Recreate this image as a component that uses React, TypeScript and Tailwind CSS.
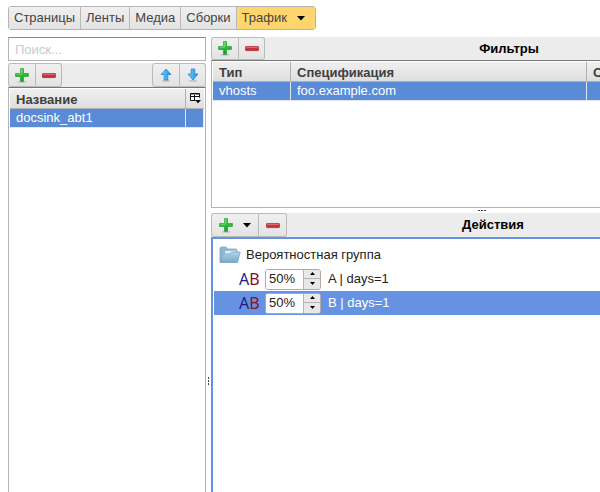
import type { ReactNode } from "react";

const BUTTON = "flex h-full items-center justify-center border-[#bababa] bg-linear-to-b from-[#f0f0f0] to-[#e3e3e3]";
const HEAD = "h-5 border-b border-[#b0b0b0] bg-linear-to-b from-[#f0f0f0] to-[#dedede] px-1.5 text-left font-bold text-[#404040]";
const CELL = "h-[19px] border-r border-b border-[#dfe7f5] bg-[#5a8bd6] px-1.5 text-white";

function PlusIcon() {
  return (
    <svg width="14" height="15" viewBox="0 0 14 15" aria-hidden="true">
      <defs>
        <linearGradient id="plus" x1="0" y1="0" x2="0" y2="1">
          <stop offset="0" stopColor="#5fdc5c" />
          <stop offset="0.5" stopColor="#2fb83a" />
          <stop offset="1" stopColor="#1c9a2b" />
        </linearGradient>
      </defs>
      <ellipse cx="7" cy="13.8" rx="4.5" ry="1" fill="#000" opacity="0.15" />
      <path d="M5.5 .6h3v4.900h4.900v3H8.500v4.900h-3V8.500H.6v-3h4.900z" fill="url(#plus)" stroke="#2da53a" strokeWidth="0.8" strokeLinejoin="round" />
      <path d="M6.300 1.500v4.800H1.500" fill="none" stroke="#9aee8e" strokeWidth="0.7" opacity="0.8" />
    </svg>
  );
}

function MinusIcon() {
  return (
    <svg width="14" height="15" viewBox="0 0 14 15" aria-hidden="true">
      <rect x="1" y="9" width="12" height="1.500" fill="#000" opacity="0.12" />
      <rect x="0.500" y="5.500" width="13" height="4" rx="0.500" fill="#c8333a" stroke="#b3343c" strokeWidth="0.800" />
      <path d="M1.200 6.400h11.600" stroke="#e88080" strokeWidth="0.800" />
    </svg>
  );
}

function ArrowIcon({ down = false }: { down?: boolean }) {
  return (
    <svg width="12" height="14" viewBox="0 0 12 14" aria-hidden="true">
      <defs>
        <linearGradient id="arrow" x1="0" y1="0" x2="1" y2="0">
          <stop offset="0" stopColor="#7fd0fb" />
          <stop offset="0.5" stopColor="#47b0f4" />
          <stop offset="1" stopColor="#1d86dc" />
        </linearGradient>
      </defs>
      <ellipse cx="6" cy="12.800" rx="4" ry="1" fill="#000" opacity="0.16" />
      <path
        d={down ? "M4.200 1h3.600v5h3.200L6 12 1 6h3.200z" : "M6 1l5 5.500H7.800V12H4.200V6.500H1z"}
        fill="url(#arrow)"
        stroke="#2a86cf"
        strokeWidth="0.800"
        strokeLinejoin="round"
      />
    </svg>
  );
}

function Caret() {
  return (
    <svg width="8" height="5" viewBox="0 0 8 5" aria-hidden="true">
      <path d="M0 0h8L4 4.500z" fill="#000" />
    </svg>
  );
}

function ColumnsIcon() {
  return (
    <svg width="11" height="11" viewBox="0 0 11 11" aria-hidden="true">
      <path d="M1 1h8v6H1z" fill="#fff" />
      <path d="M5.500 7.500h-5v-7h9v4M.5 3.500h9M4.500 .5v7M.5 1.500h9" fill="none" stroke="#111" />
      <path d="M5 7h6L8 10.200z" fill="#000" />
      <path d="M1 1.500h8" stroke="#888" />
    </svg>
  );
}

function FolderIcon() {
  return (
    <svg width="22" height="18" viewBox="0 0 22 18" aria-hidden="true">
      <defs>
        <linearGradient id="folder" x1="0" y1="0" x2="0" y2="1">
          <stop offset="0" stopColor="#b4d3e8" />
          <stop offset="1" stopColor="#79a7c9" />
        </linearGradient>
      </defs>
      <path d="M1 16V2.500Q1 1 2.500 1H7l1.500 2H16.500q1.500 0 1.500 1.500V16z" fill="#8fb6d2" stroke="#7ba3c0" strokeWidth="0.800" />
      <path d="M6 5l11-.5v4H6z" fill="#dceaf4" />
      <path d="M1.200 16.500L4 8h7l1.800-2h8.400L18.500 16.500z" fill="url(#folder)" stroke="#7aa5c5" strokeWidth="0.800" strokeLinejoin="round" />
    </svg>
  );
}

function ToolButton({ label, className, children }: { label: string; className: string; children: ReactNode }) {
  return (
    <button type="button" aria-label={label} className={`${BUTTON} ${className}`}>
      {children}
    </button>
  );
}

function Tabs() {
  const tab = "border-r border-[#bababa] bg-linear-to-b from-[#f0f0f0] to-[#e3e3e3] px-[5px]";
  return (
    <nav className="flex h-6 w-max shrink-0 overflow-hidden rounded-[3px] border border-[#b4b4b4] text-[#444]">
      <button type="button" className={tab}>Страницы</button>
      <button type="button" className={tab}>Ленты</button>
      <button type="button" className={tab}>Медиа</button>
      <button type="button" className={tab}>Сборки</button>
      <button type="button" className="flex items-center gap-2.5 bg-[#ffd56e] pr-2.5 pl-[5px]">
        Трафик <Caret />
      </button>
    </nav>
  );
}

function Experiment({ name, selected = false }: { name: string; selected?: boolean }) {
  const step = "flex h-2.5 w-4 items-center justify-center bg-[#e8e8e8]";
  return (
    <li className={`flex h-6 items-center pl-[25px] ${selected ? "bg-[#6593e1] text-white" : "text-[#222]"}`}>
      <span className="w-[26px] font-['Noto_Sans',sans-serif] text-[16px] text-[#8b1020]" aria-hidden="true">
        <span className="text-[#1c1c90]">A</span>B
      </span>
      <span className="flex h-[21px] w-14 overflow-hidden rounded-[3px] border border-[#aaa] bg-white">
        <input aria-label={name} defaultValue="50%" className="min-w-0 flex-1 bg-white pl-[3px] text-[13px] text-[#222] outline-none" />
        <span className="flex flex-col border-l border-[#b4b4b4]">
          <button type="button" aria-label="Больше" className={`${step} border-b border-[#b4b4b4]`}>
            <svg width="5" height="3" viewBox="0 0 5 3"><path d="M0 3h5L2.500 0z" /></svg>
          </button>
          <button type="button" aria-label="Меньше" className={step}>
            <svg width="5" height="3" viewBox="0 0 5 3"><path d="M0 0h5L2.500 3z" /></svg>
          </button>
        </span>
      </span>
      <span className="pl-[7px]">{name}</span>
    </li>
  );
}

function Grip({ vertical = false }: { vertical?: boolean }) {
  const dot = vertical ? "h-0.5 w-px bg-[#444]" : "h-px w-0.5 bg-[#444]";
  return (
    <span className={`flex ${vertical ? "flex-col gap-px" : "gap-px"}`}>
      <i className={dot} />
      <i className={dot} />
      <i className={dot} />
    </span>
  );
}

export default function App() {
  return (
    <div className="flex h-screen flex-col overflow-hidden bg-white pt-1.5 pl-2 font-['Liberation_Sans',Arial,sans-serif] text-[13px] leading-4 text-[#222]">
      <Tabs />
      <main className="mt-[7px] flex min-h-[688px] flex-1">
        <aside className="flex w-[198px] shrink-0 flex-col">
          <input
            type="search"
            aria-label="Поиск"
            placeholder="Поиск..."
            className="h-6 shrink-0 border border-[#b4b4b4] border-t-[#888] px-1.5 outline-none placeholder:text-[#ccc8cc]"
          />
          <div className="mt-0.5 flex h-6 shrink-0 bg-[#ececec]">
            <ToolButton label="Добавить" className="w-7 rounded-l-[3px] border"><PlusIcon /></ToolButton>
            <ToolButton label="Удалить" className="w-[26px] rounded-r-[3px] border border-l-0"><MinusIcon /></ToolButton>
            <ToolButton label="Вверх" className="ml-auto w-7 rounded-l-[3px] border"><ArrowIcon /></ToolButton>
            <ToolButton label="Вниз" className="w-[26px] rounded-r-[3px] border border-l-0"><ArrowIcon down /></ToolButton>
          </div>
          <div className="flex-1 border border-[#b4b4b4] border-t-[#777] p-px">
            <table className="w-full table-fixed border-separate border-spacing-0">
              <thead>
                <tr>
                  <th className={`${HEAD} border-r pt-0.5`}>Название</th>
                  <th className="h-5 w-[18px] border-b border-[#b0b0b0] bg-linear-to-b from-[#f0f0f0] to-[#dedede] p-0">
                    <button type="button" aria-label="Столбцы" className="flex w-full justify-center"><ColumnsIcon /></button>
                  </th>
                </tr>
              </thead>
              <tbody>
                <tr>
                  <td className={CELL}>docsink_abt1</td>
                  <td className={CELL} />
                </tr>
              </tbody>
            </table>
          </div>
        </aside>
        <div className="flex w-[5px] shrink-0 items-center justify-center"><Grip vertical /></div>
        <div className="flex min-w-[542px] flex-1 flex-col">
          <section className="flex h-[171px] shrink-0 flex-col">
            <header className="flex h-[23px] shrink-0 items-center bg-[#ececec]">
              <ToolButton label="Добавить фильтр" className="w-7 rounded-l-[3px] border"><PlusIcon /></ToolButton>
              <ToolButton label="Удалить фильтр" className="w-[26px] rounded-r-[3px] border border-l-0"><MinusIcon /></ToolButton>
              <h2 className="flex-1 text-center font-bold text-black">Фильтры</h2>
            </header>
            <div className="flex-1 border border-[#b4b4b4] border-t-[#777] p-px">
              <table className="w-full table-fixed border-separate border-spacing-0">
                <thead>
                  <tr>
                    <th className={`${HEAD} w-[78px] border-r pt-0.5`}>Тип</th>
                    <th className={`${HEAD} w-[296px] border-r pt-0.5`}>Спецификация</th>
                    <th className={`${HEAD} pt-0.5`}>Описание</th>
                  </tr>
                </thead>
                <tbody>
                  <tr>
                    <td className={CELL}>vhosts</td>
                    <td className={CELL}>foo.example.com</td>
                    <td className={CELL} />
                  </tr>
                </tbody>
              </table>
            </div>
          </section>
          <div className="flex h-[5px] shrink-0 items-center justify-center"><Grip /></div>
          <section className="flex flex-1 flex-col">
            <header className="flex h-6 shrink-0 items-center bg-[#ececec] pr-[54px]">
              <ToolButton label="Добавить действие" className="w-12 gap-2.5 rounded-l-[3px] border"><PlusIcon /><Caret /></ToolButton>
              <ToolButton label="Удалить действие" className="w-7 rounded-r-[3px] border border-l-0"><MinusIcon /></ToolButton>
              <h2 className="flex-1 text-center font-bold text-black">Действия</h2>
            </header>
            <ul className="flex-1 border-2 border-[#6593e1] pt-1 pl-px">
              <li className="flex h-6 items-center gap-[5px] pl-[5px]"><FolderIcon />Вероятностная группа</li>
              <Experiment name="A | days=1" />
              <Experiment name="B | days=1" selected />
            </ul>
          </section>
        </div>
      </main>
    </div>
  );
}
